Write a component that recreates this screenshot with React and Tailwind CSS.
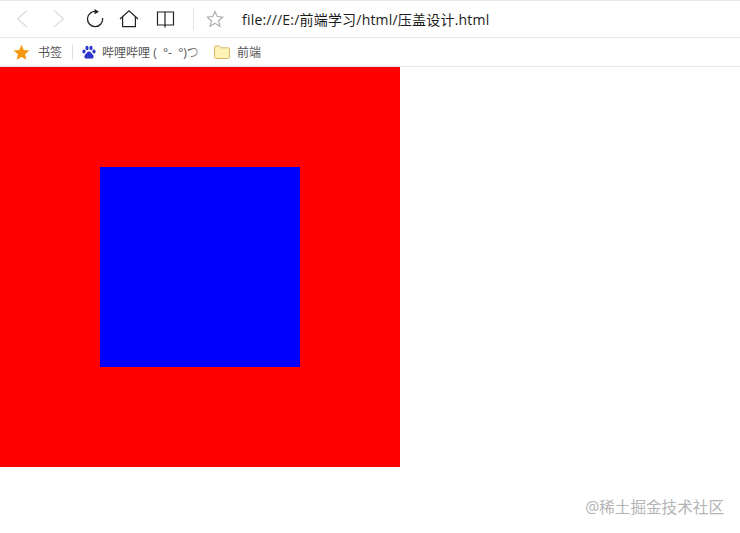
import React from "react";

const cjk = { fontFamily: '"Open Sans", "Noto Sans CJK SC", sans-serif' };

function Back({ flip }) {
  return (
    <svg width="14" height="20" viewBox="0 0 14 20" fill="none" stroke="#dcdcdc" strokeWidth="1.2" style={flip ? { transform: "scaleX(-1)" } : undefined}>
      <path d="M11 1.5 L1.5 9.8 L11 18" />
    </svg>
  );
}

export default function App() {
  return (
    <div className="relative w-[740px] h-[533px] bg-white overflow-hidden" style={cjk}>
      <header className="h-[38px] border-t border-b border-[#e6e6e6] flex items-center">
        <div className="ml-[16px] mr-[21px] flex"><Back /></div>
        <div className="mr-[20px] flex"><Back flip /></div>
        <svg className="mr-[14px]" width="20" height="20" viewBox="0 0 20 20" fill="none" stroke="#222" strokeWidth="1.3">
          <path d="M11.5 2.6 A7.6 7.6 0 1 0 17.6 9" />
          <path d="M9.6 0 L14 2.7 L9.6 5.2 Z" fill="#222" stroke="none" />
        </svg>
        <svg className="mr-[16px]" width="20" height="20" viewBox="0 0 20 20" fill="none" stroke="#222" strokeWidth="1.2">
          <path d="M1 10 L10 1.8 L19 10" />
          <path d="M3.6 8 V17.6 H16.4 V8" />
        </svg>
        <svg className="mr-[18px]" width="20" height="20" viewBox="0 0 20 20" fill="none" stroke="#222" strokeWidth="1.2">
          <path d="M2.5 3 H10 V16 H2.5 Z" />
          <path d="M10 3 H18.5 V16 H10" />
          <path d="M10 16 V18.5" />
        </svg>
        <div className="w-px h-[22px] bg-[#e4e4e4] mr-[12px]" />
        <svg className="mr-[18px]" width="18" height="18" viewBox="0 0 18 18" fill="none" stroke="#a8a8a8" strokeWidth="1.1">
          <path d="M9 1.5 L11.2 6.6 L16.8 7.1 L12.6 10.8 L13.9 16.3 L9 13.4 L4.1 16.3 L5.4 10.8 L1.2 7.1 L6.8 6.6 Z" />
        </svg>
        <span className="pt-[2px] text-[14px] leading-[18px] tracking-[0.2px] text-[#1a1a1a] whitespace-nowrap">file:///E:/前端学习/html/压盖设计.html</span>
      </header>

      <nav className="h-[29px] border-b border-[#e6e6e6] flex items-center text-[12px] leading-[16px] text-[#555] whitespace-nowrap">
        <svg className="ml-[13px] mr-[8px]" width="17" height="17" viewBox="0 0 18 18">
          <path d="M9 0.8 L11.4 6.4 L17.4 6.9 L12.8 10.9 L14.2 16.8 L9 13.7 L3.8 16.8 L5.2 10.9 L0.6 6.9 L6.6 6.4 Z" fill="#f59a10" />
        </svg>
        <span className="mr-[10px] pt-[1px]">书签</span>
        <div className="w-px h-[16px] bg-[#e0e0e0] mr-[9px]" />
        <svg className="mr-[6px]" width="14" height="15" viewBox="0 0 14 15" fill="#2b35c8">
          <ellipse cx="2" cy="6.5" rx="1.6" ry="2.1" />
          <ellipse cx="5" cy="3" rx="1.6" ry="2.2" />
          <ellipse cx="9" cy="3" rx="1.6" ry="2.2" />
          <ellipse cx="12" cy="6.5" rx="1.6" ry="2.1" />
          <path d="M7 6.5 C9 6.5 9.5 8.5 11 10 C12.5 11.5 11.5 14 9 13.6 C8 13.4 6 13.4 5 13.6 C2.5 14 1.5 11.5 3 10 C4.5 8.5 5 6.5 7 6.5 Z" />
        </svg>
        <div className="relative w-[97px] mr-[15px] pt-[1px]">
          <span className="whitespace-pre">哔哩哔哩 (  °-  °)つ</span>
          <div className="absolute top-0 bottom-0 left-[88px] w-[16px] bg-gradient-to-r from-transparent to-white" />
        </div>
        <svg className="mr-[7px]" width="16" height="14" viewBox="0 0 16 14">
          <path d="M0.5 12.5 V2 Q0.5 1 1.5 1 H5.5 L7 2.8 H14.5 Q15.5 2.8 15.5 3.8 V12.5 Q15.5 13.5 14.5 13.5 H1.5 Q0.5 13.5 0.5 12.5 Z" fill="#fdf1b8" stroke="#d9b968" />
        </svg>
        <span className="pt-[1px]">前端</span>
      </nav>

      <main className="w-[400px] h-[400px] bg-[#ff0000] flex items-center justify-center">
        <div className="w-[200px] h-[200px] bg-[#0000ff]" />
      </main>

      <div className="absolute right-[16px] top-[497px] text-[15.6px] leading-[21px] text-[#b4b4b4] whitespace-nowrap">@稀土掘金技术社区</div>
    </div>
  );
}
